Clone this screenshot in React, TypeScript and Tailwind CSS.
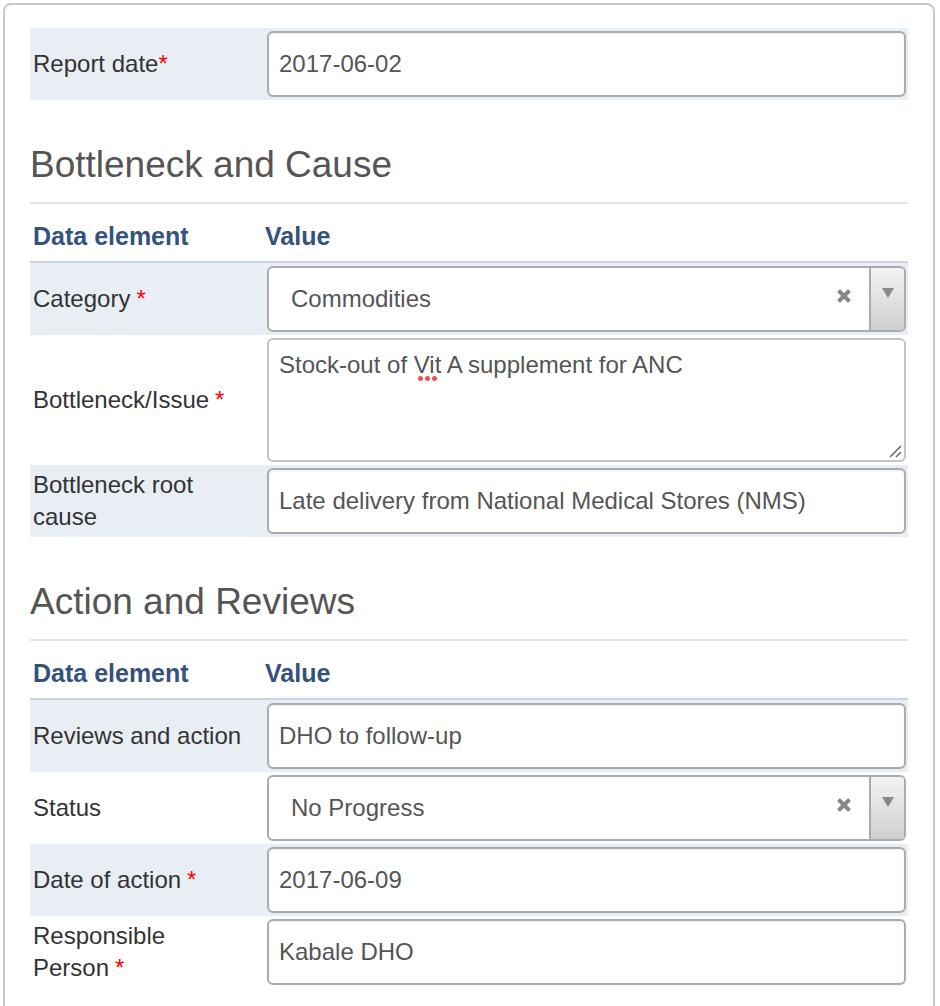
import type { ReactNode } from 'react'

function Star({ gap = true }: { gap?: boolean }) {
	return <span className={`text-[#ff0000] ${gap ? 'ml-[6px]' : ''}`}>*</span>
}

function Row({ label, striped, children }: { label: ReactNode; striped?: boolean; children: ReactNode }) {
	return (
		<div className={`grid grid-cols-[232px_1fr] ${striped ? 'bg-[#e9eef5]' : 'bg-white'}`}>
			<div className="flex items-center pl-[3px] pr-[14px] leading-[32px] text-[#333]">
				<span>{label}</span>
			</div>
			<div className="py-[3px] pl-[5px] pr-[2px]">{children}</div>
		</div>
	)
}

function TextBox({ value }: { value: string }) {
	return (
		<div className="flex h-[66px] items-center rounded-[6px] border-2 border-[#ababab] bg-white px-[10px] text-[#555] shadow-[inset_0_1px_2px_rgba(0,0,0,0.08)]">
			{value}
		</div>
	)
}

function SelectBox({ value }: { value: string }) {
	return (
		<div className="flex h-[66px] items-stretch overflow-hidden rounded-[6px] border-2 border-[#ababab] bg-white text-[#555]">
			<div className="flex flex-1 items-center pl-[22px]">{value}</div>
			<div className="flex w-[50px] items-center justify-center pb-[6px]">
				<svg width="16" height="16" viewBox="0 0 16 16">
					<path d="M2.5 2.5 L13.5 13.5 M13.5 2.5 L2.5 13.5" stroke="#888" strokeWidth="4" />
				</svg>
			</div>
			<div className="flex w-[35px] justify-center border-l-2 border-[#ababab] bg-gradient-to-b from-[#f4f4f4] to-[#cfcfcf] pt-[20px]">
				<svg width="12" height="10" viewBox="0 0 12 10">
					<path d="M0 0 H12 L6 10 Z" fill="#888" />
				</svg>
			</div>
		</div>
	)
}

function SectionHead({ title }: { title: string }) {
	return (
		<>
			<div className="mt-[45px] text-[37px] leading-[40px] text-[#555]">{title}</div>
			<div className="mt-[17px] h-[2px] bg-[#e3e3e3]" />
			<div className="grid grid-cols-[232px_1fr] border-b-2 border-[#c8d5e6] pt-[18px] pb-[11px] text-[25px] font-bold leading-[28px] text-[#35527e]">
				<div className="pl-[3px]">Data element</div>
				<div className="pl-[3px]">Value</div>
			</div>
		</>
	)
}

export default function App() {
	return (
		<div className="h-[1006px] overflow-hidden bg-white pl-[3px] pr-[5px] pt-[3px]" style={{ fontFamily: '"Liberation Sans", Arial, sans-serif' }}>
			<div className="min-h-[1100px] rounded-[8px] border-2 border-[#c9c9c9] px-[25px] pt-[23px] text-[24px]">
				<Row striped label={<>Report date<Star gap={false} /></>}>
					<TextBox value="2017-06-02" />
				</Row>

				<SectionHead title="Bottleneck and Cause" />
				<Row striped label={<>Category<Star /></>}>
					<SelectBox value="Commodities" />
				</Row>
				<Row label={<>Bottleneck/Issue<Star /></>}>
					<div className="relative h-[124px] rounded-[6px] border-2 border-[#c4c4c4] bg-white px-[10px] pt-[11px] leading-[28px] text-[#555]">
						Stock-out of{' '}
						<span className="relative">
							Vit
							<span className="absolute left-[4px] top-[25px] flex gap-[2px]">
								<span className="h-[5px] w-[5px] rounded-full bg-[#f05050]" />
								<span className="h-[5px] w-[5px] rounded-full bg-[#f05050]" />
								<span className="h-[5px] w-[5px] rounded-full bg-[#f05050]" />
							</span>
						</span>{' '}
						A supplement for ANC
						<svg className="absolute bottom-[2px] right-[2px]" width="14" height="14" viewBox="0 0 14 14">
							<path d="M2 13 L13 2 M8 13 L13 8" stroke="#666" strokeWidth="1.5" />
						</svg>
					</div>
				</Row>
				<Row striped label="Bottleneck root cause">
					<TextBox value="Late delivery from National Medical Stores (NMS)" />
				</Row>

				<SectionHead title="Action and Reviews" />
				<Row striped label="Reviews and action">
					<TextBox value="DHO to follow-up" />
				</Row>
				<Row label="Status">
					<SelectBox value="No Progress" />
				</Row>
				<Row striped label={<>Date of action<Star /></>}>
					<TextBox value="2017-06-09" />
				</Row>
				<Row label={<>Responsible Person<Star /></>}>
					<TextBox value="Kabale DHO" />
				</Row>
			</div>
		</div>
	)
}
